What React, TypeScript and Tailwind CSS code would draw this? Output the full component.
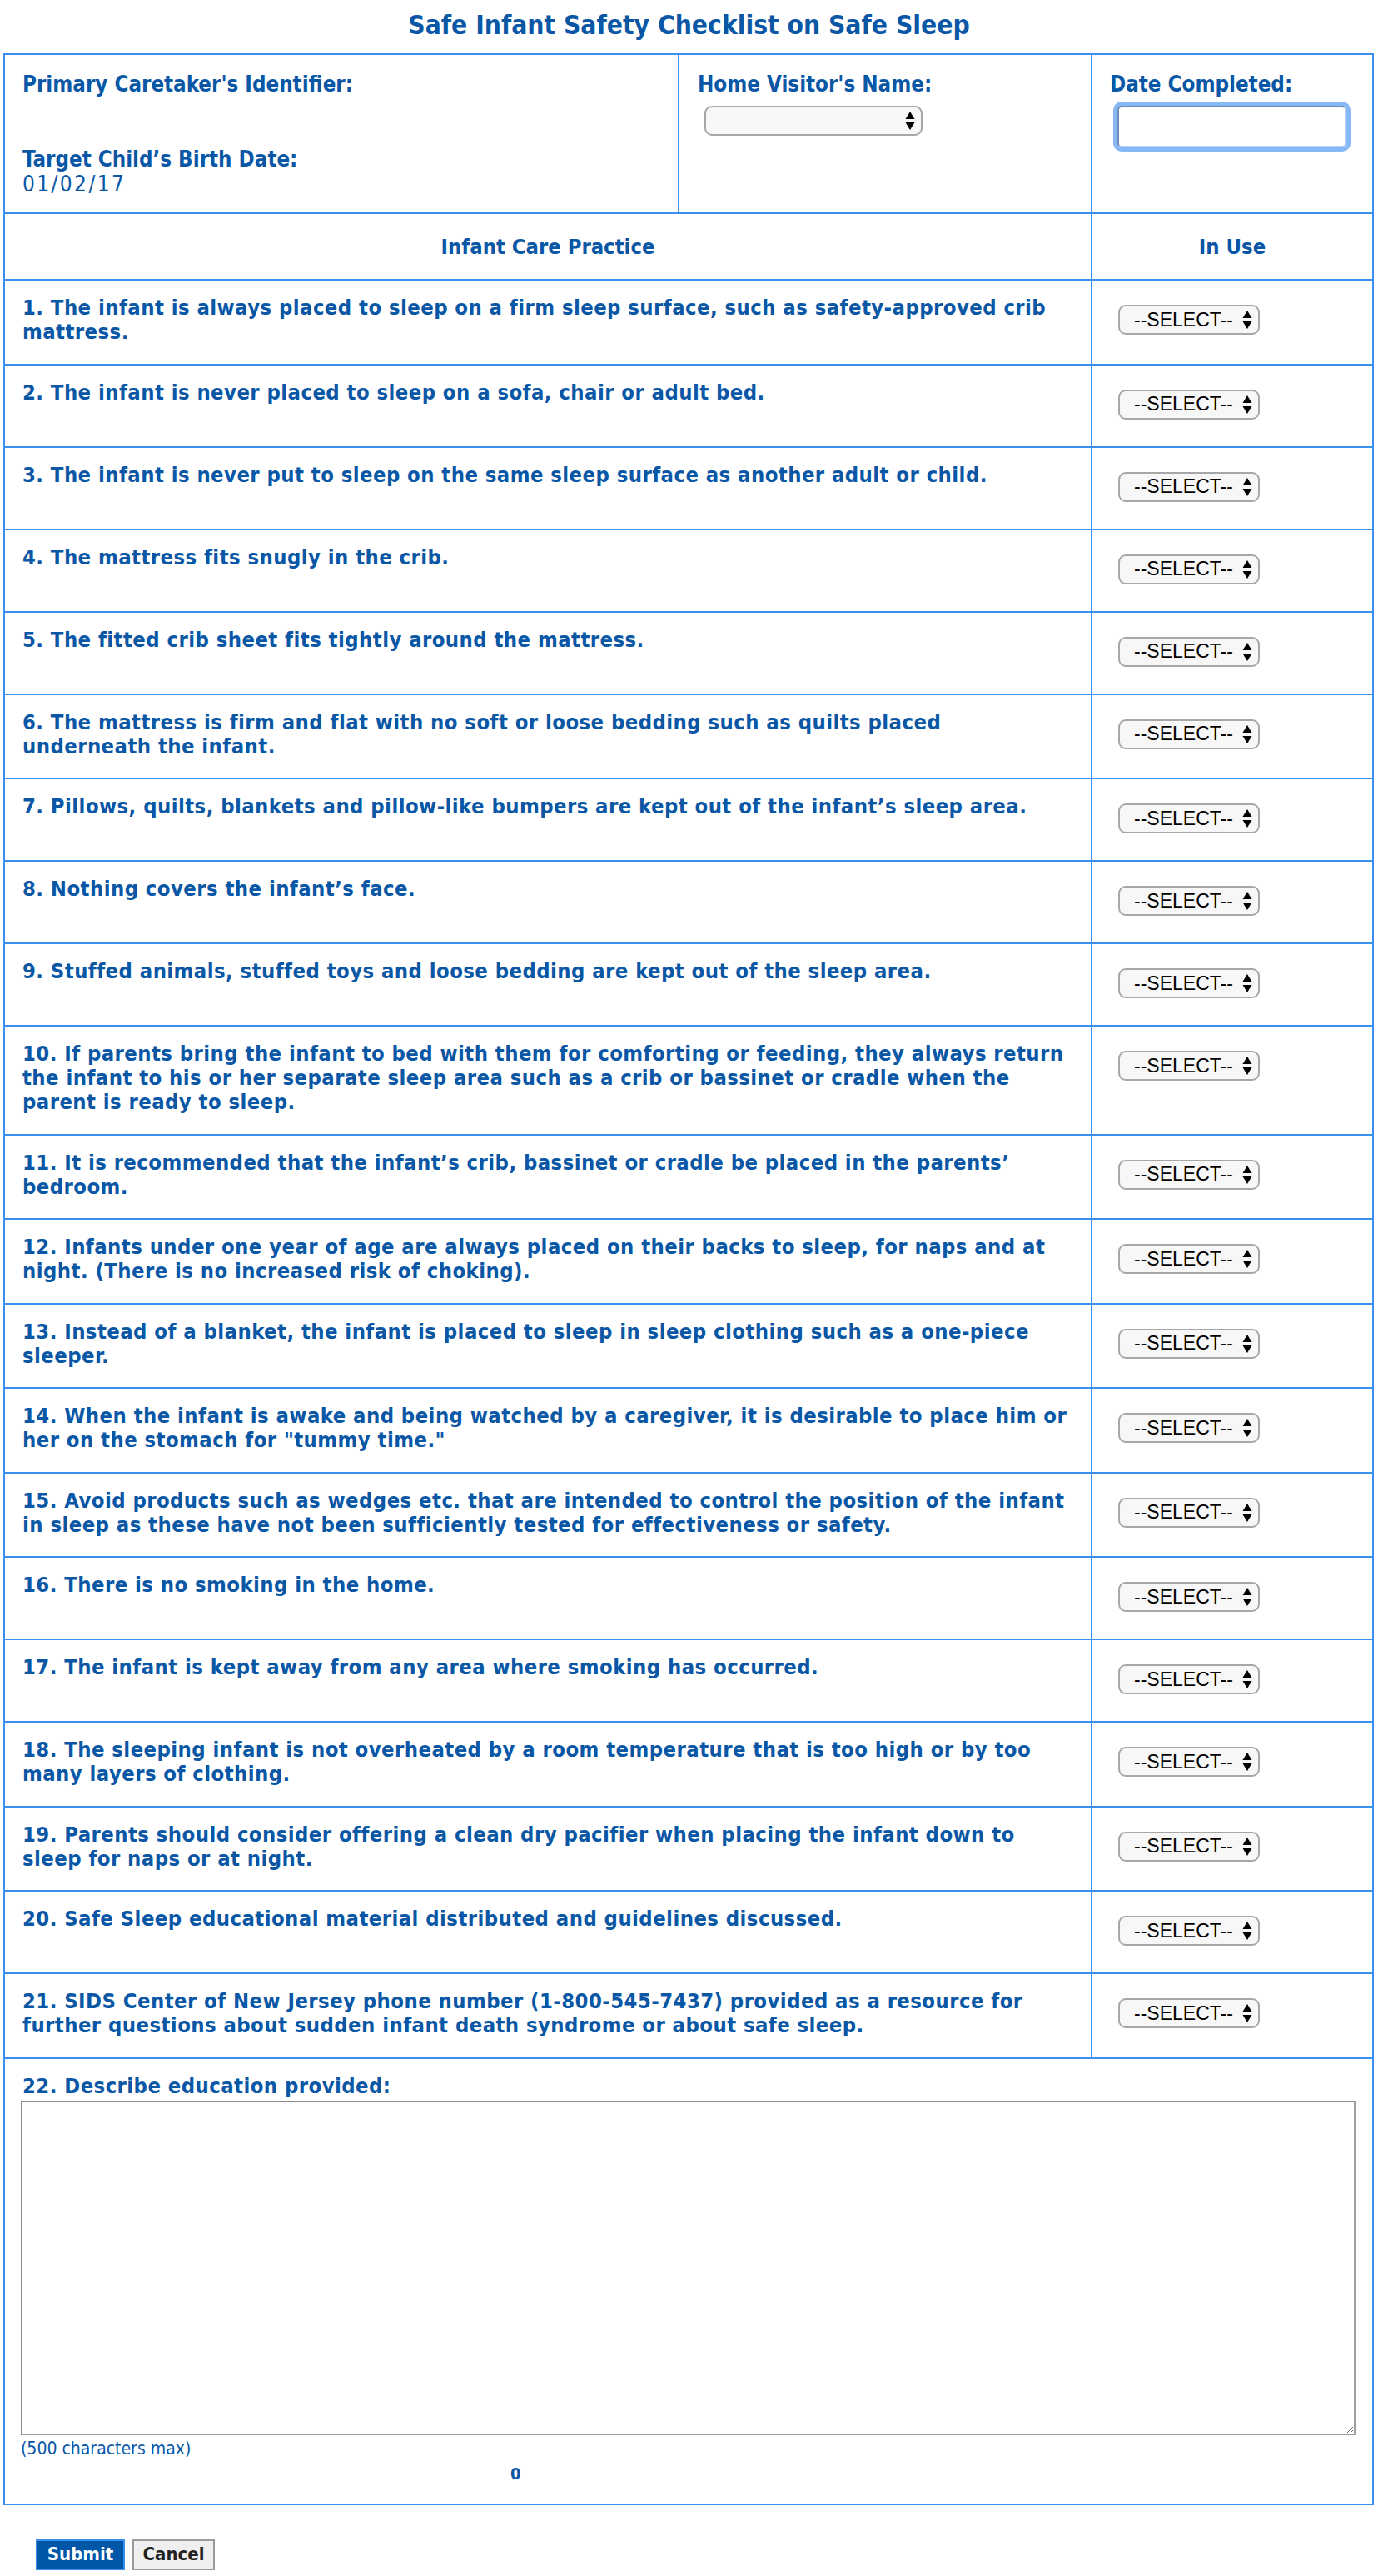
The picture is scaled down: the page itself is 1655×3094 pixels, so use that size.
import React from "react";

const items: string[] = [
  "1. The infant is always placed to sleep on a firm sleep surface, such as safety-approved crib mattress.",
  "2. The infant is never placed to sleep on a sofa, chair or adult bed.",
  "3. The infant is never put to sleep on the same sleep surface as another adult or child.",
  "4. The mattress fits snugly in the crib.",
  "5. The fitted crib sheet fits tightly around the mattress.",
  "6. The mattress is firm and flat with no soft or loose bedding such as quilts placed underneath the infant.",
  "7. Pillows, quilts, blankets and pillow-like bumpers are kept out of the infant\u2019s sleep area.",
  "8. Nothing covers the infant\u2019s face.",
  "9. Stuffed animals, stuffed toys and loose bedding are kept out of the sleep area.",
  "10. If parents bring the infant to bed with them for comforting or feeding, they always return the infant to his or her separate sleep area such as a crib or bassinet or cradle when the parent is ready to sleep.",
  "11. It is recommended that the infant\u2019s crib, bassinet or cradle be placed in the parents\u2019 bedroom.",
  "12. Infants under one year of age are always placed on their backs to sleep, for naps and at night. (There is no increased risk of choking).",
  "13. Instead of a blanket, the infant is placed to sleep in sleep clothing such as a one-piece sleeper.",
  "14. When the infant is awake and being watched by a caregiver, it is desirable to place him or her on the stomach for \"tummy time.\"",
  "15. Avoid products such as wedges etc. that are intended to control the position of the infant in sleep as these have not been sufficiently tested for effectiveness or safety.",
  "16. There is no smoking in the home.",
  "17. The infant is kept away from any area where smoking has occurred.",
  "18. The sleeping infant is not overheated by a room temperature that is too high or by too many layers of clothing.",
  "19. Parents should consider offering a clean dry pacifier when placing the infant down to sleep for naps or at night.",
  "20. Safe Sleep educational material distributed and guidelines discussed.",
  "21. SIDS Center of New Jersey phone number (1-800-545-7437) provided as a resource for further questions about sudden infant death syndrome or about safe sleep.",
];

function Arrows() {
  return (
    <svg
      width="12"
      height="22"
      viewBox="0 0 12 22"
      className="pointer-events-none absolute right-[9px] top-1/2 -translate-y-1/2"
    >
      <polygon points="6,0 11.5,9 0.5,9" fill="#000" />
      <polygon points="0.5,13 11.5,13 6,22" fill="#000" />
    </svg>
  );
}

function FakeSelect({ width, label }: { width: string; label?: string }) {
  return (
    <div className={`relative h-[36px] ${width}`}>
      <select
        className="h-full w-full appearance-none rounded-[9px] border-2 border-[#a7a7a7] bg-[#f7f7f7] pl-[17px] font-['Liberation_Sans',Arial,sans-serif] text-[23px] leading-none text-black outline-none"
        defaultValue=""
      >
        <option value="">{label ?? ""}</option>
      </select>
      <Arrows />
    </div>
  );
}

export default function App() {
  return (
    <div className="w-[1655px] bg-white pb-[10px] font-['DejaVu_Sans_Condensed','DejaVu_Sans',sans-serif] font-stretch-condensed text-[#0a57a6]">
      <h1 className="h-[64px] pt-[10px] text-center text-[31.5px] font-bold leading-[40px]">
        Safe Infant Safety Checklist on Safe Sleep
      </h1>

      <div className="ml-[4px] w-[1646px] border-2 border-[#3b8ff0]">
        {/* top section */}
        <div className="flex h-[191px] border-b-2 border-[#3b8ff0]">
          <div className="w-[810px] border-r-2 border-[#3b8ff0] pl-[21px] pt-[20px]">
            <div className="text-[25.7px] font-bold leading-[30px]">Primary Caretaker's Identifier:</div>
            <div className="mt-[60px] text-[25.7px] font-bold leading-[30px]">Target Child’s Birth Date:</div>
            <div className="text-[26px] leading-[30px] tracking-[2.4px]">01/02/17</div>
          </div>
          <div className="w-[496px] border-r-2 border-[#3b8ff0] pl-[22px] pt-[20px]">
            <div className="text-[25.7px] font-bold leading-[30px]">Home Visitor's Name:</div>
            <div className="ml-[8px] mt-[11px]">
              <FakeSelect width="w-[262px]" />
            </div>
          </div>
          <div className="flex-1 pl-[21px] pt-[20px]">
            <div className="text-[25.7px] font-bold leading-[30px]">Date Completed:</div>
            <input
              type="text"
              className="ml-[9px] mt-[11px] h-[50px] w-[275px] rounded-[5px] border-2 border-[#6f8fba] border-b-[#b5d2f5] border-r-[#b5d2f5] bg-white outline-none ring-[5px] ring-[#86b8f5]"
            />
          </div>
        </div>

        {/* header row */}
        <div className="flex h-[80px] border-b-2 border-[#3b8ff0] text-[25.4px] font-bold">
          <div className="flex w-[1306px] items-center justify-center border-r-2 border-[#3b8ff0]">
            Infant Care Practice
          </div>
          <div className="flex flex-1 items-center justify-center">In Use</div>
        </div>

        {/* item rows */}
        {items.map((t) => (
          <div key={t} className="flex border-b-2 border-[#3b8ff0]">
            <div className="w-[1306px] border-r-2 border-[#3b8ff0] pb-[23.5px] pl-[21px] pr-[23px] pt-[18px] text-[25.4px] font-bold leading-[29px] tracking-[0.45px]">
              {t}
            </div>
            <div className="flex-1 pb-[32px] pl-[31px] pt-[29px]">
              <FakeSelect width="w-[170px]" label="--SELECT--" />
            </div>
          </div>
        ))}

        {/* describe section */}
        <div className="pb-[24px] pl-[19px] pt-[18px]">
          <div className="pl-[2px] text-[25.4px] font-bold leading-[29px] tracking-[0.45px]">
            22. Describe education provided:
          </div>
          <textarea
            className="mt-[3px] block h-[402px] w-[1603px] border-2 border-[#8c8c8c] border-b-[#a0a0a0] border-r-[#a0a0a0] bg-white outline-none"
            maxLength={500}
          />
          <div className="mt-[4px] text-[21px] leading-[24px]">(500 characters max)</div>
          <div className="mt-[6px] pl-[588px] text-[20px] font-bold leading-[24px]">0</div>
        </div>
      </div>

      <div className="ml-[43px] mt-[41px] flex gap-[9px]">
        <button className="h-[37px] w-[107px] border-2 border-[#3b8ff0] bg-[#0057a8] text-[22px] font-bold leading-none text-white">
          Submit
        </button>
        <button className="h-[37px] w-[99px] border-2 border-[#9a9a9a] bg-[#efefef] text-[22px] font-bold leading-none text-[#222]">
          Cancel
        </button>
      </div>
    </div>
  );
}
